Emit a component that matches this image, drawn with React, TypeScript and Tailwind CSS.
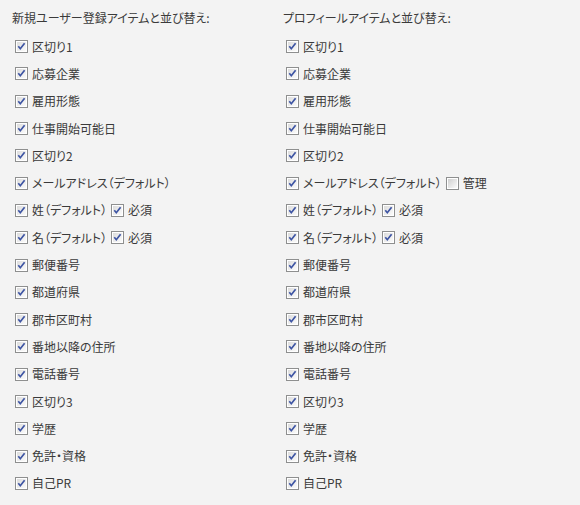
const leftItems = [
  { label: "区切り1" },
  { label: "応募企業" },
  { label: "雇用形態" },
  { label: "仕事開始可能日" },
  { label: "区切り2" },
  { label: "メールアドレス（デフォルト）" },
  { label: "姓（デフォルト）", extra: "必須", extraChecked: true },
  { label: "名（デフォルト）", extra: "必須", extraChecked: true },
  { label: "郵便番号" },
  { label: "都道府県" },
  { label: "郡市区町村" },
  { label: "番地以降の住所" },
  { label: "電話番号" },
  { label: "区切り3" },
  { label: "学歴" },
  { label: "免許・資格" },
  { label: "自己PR" },
];

const rightItems = leftItems.map((item) =>
  item.label === "メールアドレス（デフォルト）"
    ? { ...item, extra: "管理", extraChecked: false }
    : item
);

const Box = ({ checked }: { checked: boolean }) => (
  <svg width="13" height="13" viewBox="0 0 13 13" className="shrink-0">
    <defs>
      <linearGradient id={checked ? "gc" : "gu"} x1="0" y1="0" x2="1" y2="1">
        <stop offset="0" stopColor={checked ? "#dcdcdc" : "#cfcfcf"} />
        <stop offset="1" stopColor="#fbfbfb" />
      </linearGradient>
    </defs>
    <rect x="0.5" y="0.5" width="12" height="12" fill="#fff" stroke="#8e8f8f" />
    <rect x="2" y="2" width="9" height="9" fill={`url(#${checked ? "gc" : "gu"})`} />
    {checked && (
      <path d="M3.3 6.3 L5.3 8.7 L9.6 3.3" fill="none" stroke="#3d54a3" strokeWidth="1.7" />
    )}
  </svg>
);

type Item = { label: string; extra?: string; extraChecked?: boolean };

const Column = ({ title, items }: { title: string; items: Item[] }) => (
  <div className="w-[271px]">
    <div className="h-[16px] mt-[10px] mb-[7px] leading-[16px]">{title}</div>
    {items.map((item, i) => (
      <div key={i} className="h-[27.3px] flex items-center pl-[3px]">
        <Box checked />
        <span className="ml-[4px]">{item.label}</span>
        {item.extra && (
          <>
            <span className="ml-[4px]">
              <Box checked={!!item.extraChecked} />
            </span>
            <span className="ml-[4px]">{item.extra}</span>
          </>
        )}
      </div>
    ))}
  </div>
);

export default function App() {
  return (
    <div
      className="w-[580px] h-[505px] bg-[#f3f3f3] text-[#3a3a3a] text-[12px] [font-feature-settings:'palt'] flex pl-[12px] overflow-hidden"
      style={{ fontFamily: '"Noto Sans CJK JP", "Noto Sans", sans-serif' }}
    >
      <Column title="新規ユーザー登録アイテムと並び替え:" items={leftItems} />
      <Column title="プロフィールアイテムと並び替え:" items={rightItems} />
    </div>
  );
}
